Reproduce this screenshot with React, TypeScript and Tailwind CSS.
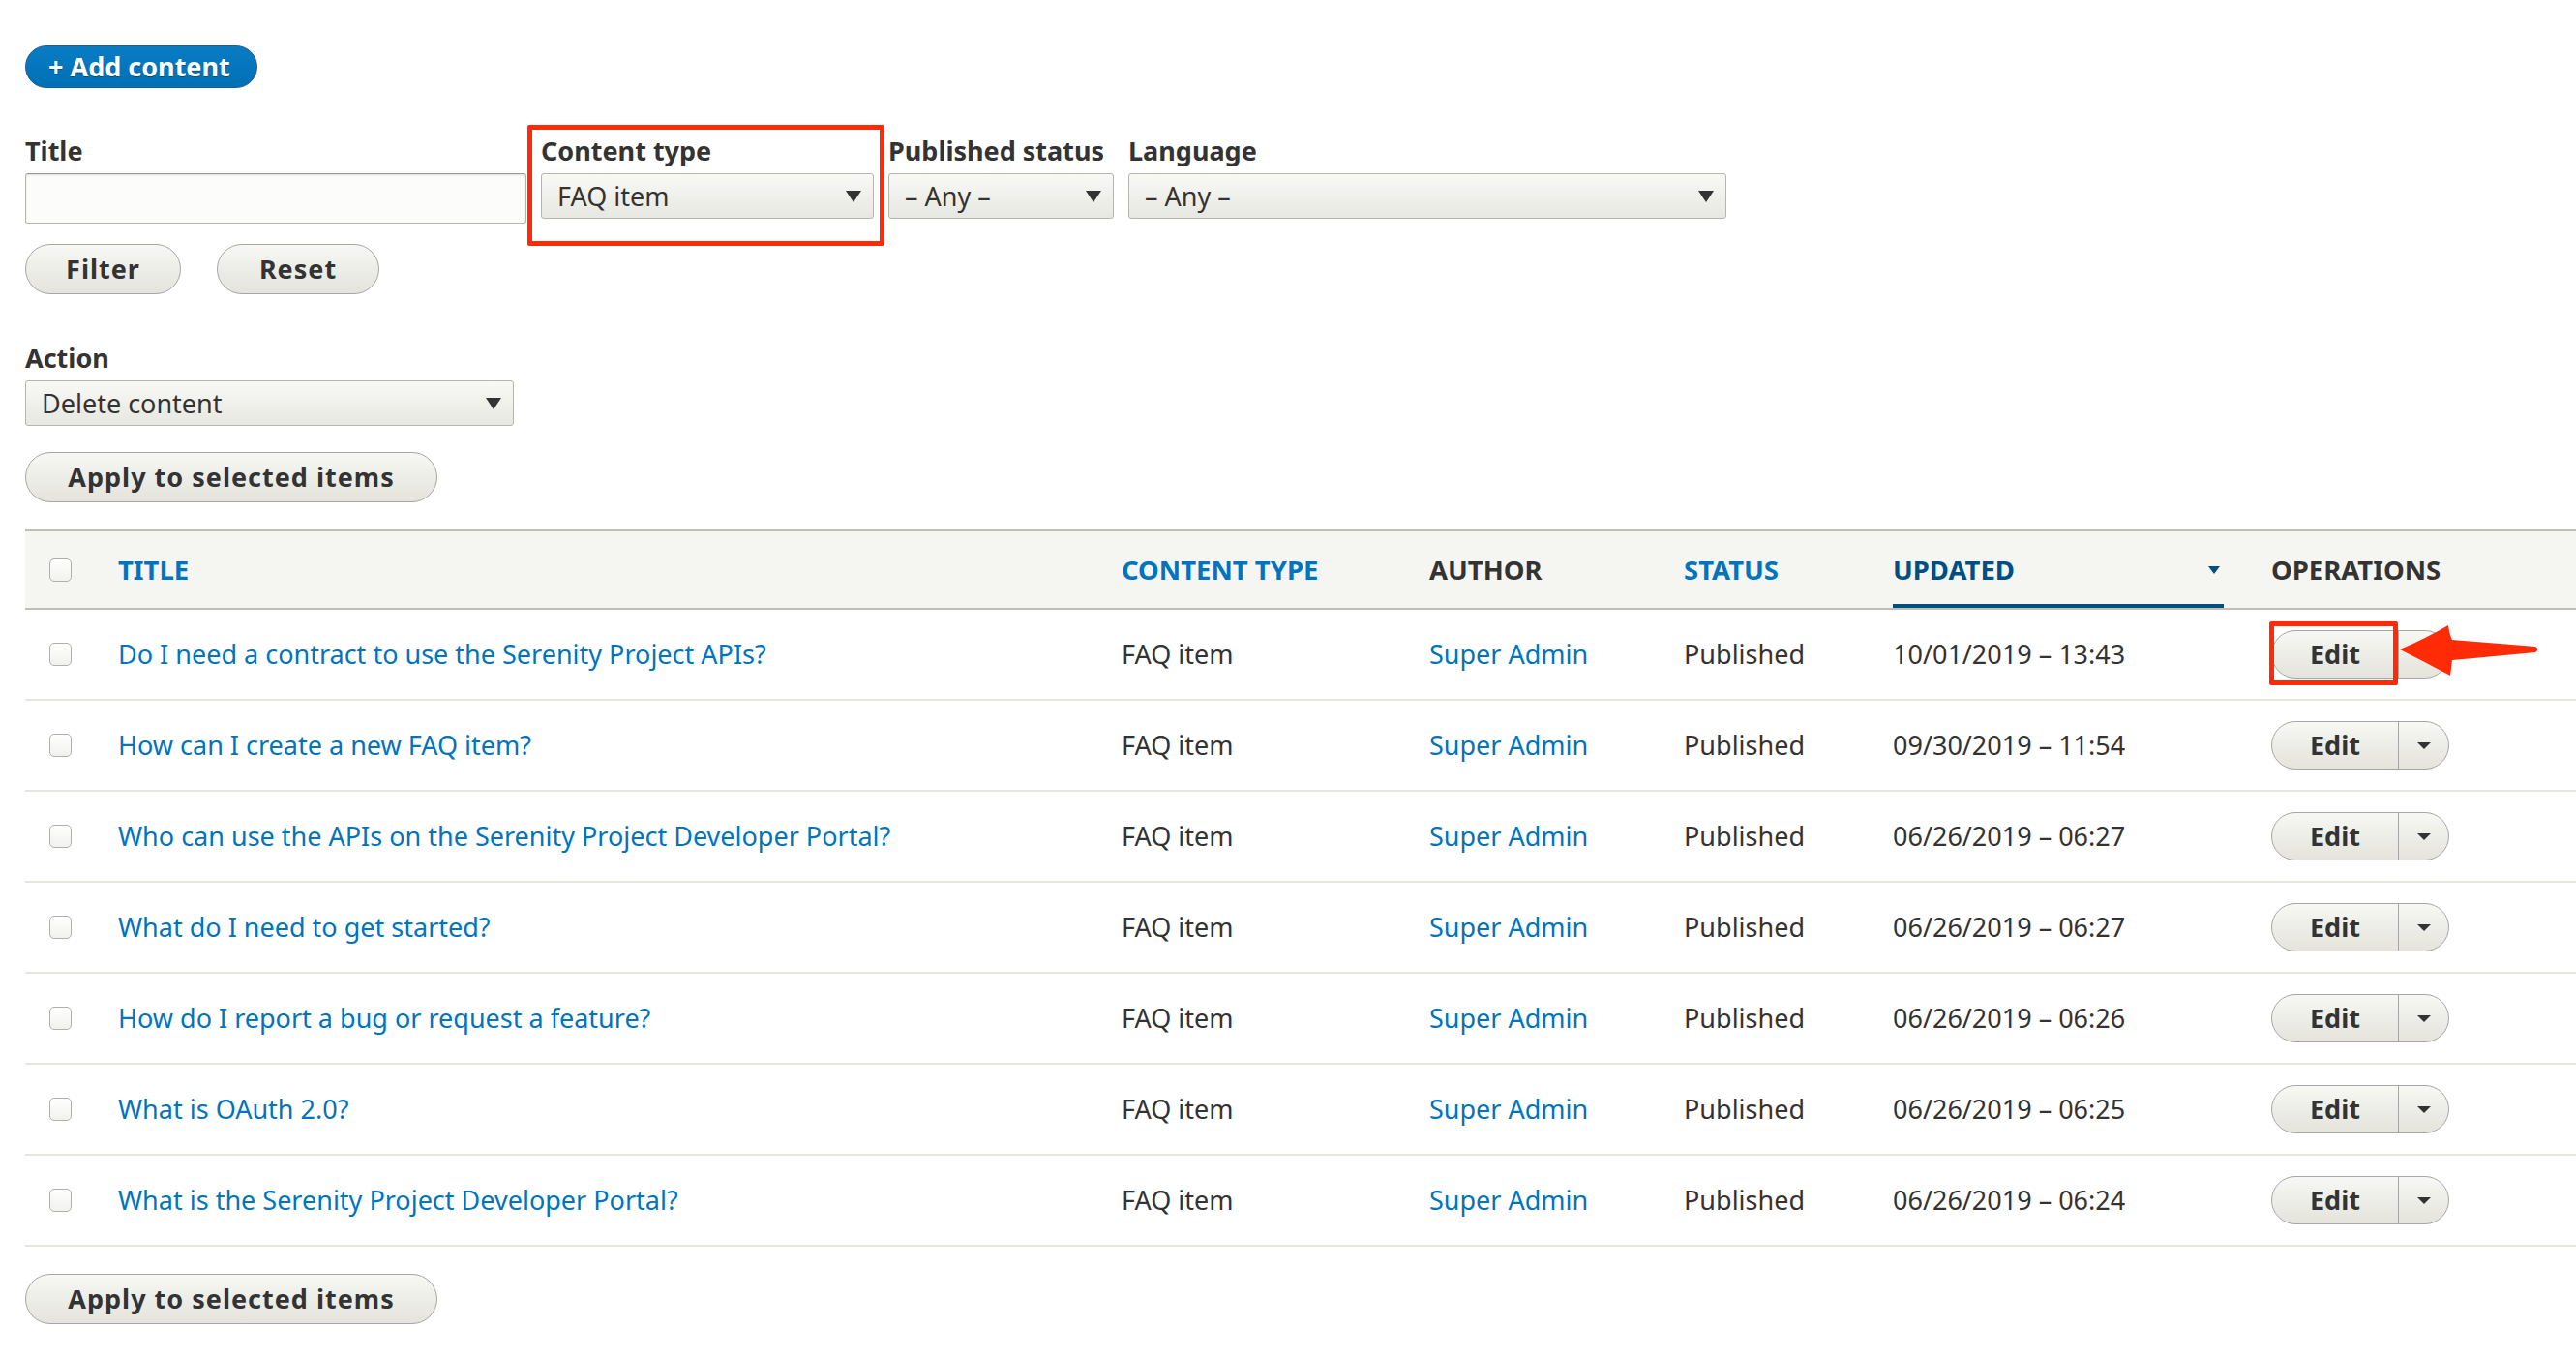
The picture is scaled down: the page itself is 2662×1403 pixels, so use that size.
import React from "react";

function Tri({ w, h, c }: { w: number; h: number; c: string }) {
  return (
    <svg width={w} height={h} viewBox="0 0 10 10" preserveAspectRatio="none" className="block shrink-0">
      <path d="M0 0H10L5 10Z" fill={c} />
    </svg>
  );
}

function Checkbox() {
  return (
    <span className="block w-[23px] h-[24px] rounded-[5px] border-[1.5px] border-[#b0b0ab] bg-linear-to-b from-white to-[#f1f1ee]" />
  );
}

function Select({ value, w }: { value: string; w: string }) {
  return (
    <div
      className={`flex items-center justify-between h-[47px] ${w} rounded-[3px] border-[1.5px] border-[#b5b5b0] bg-linear-to-b from-[#f8f8f5] to-[#e8e8e2] pl-[16px] pr-[12px] text-[#333]`}
    >
      <span className="leading-none">{value}</span>
      <Tri w={16} h={12} c="#333" />
    </div>
  );
}

function EditButton({ highlight }: { highlight?: boolean }) {
  return (
    <div className="relative flex h-[50px] w-[184px] rounded-full border-[1.5px] border-[#a6a6a6] bg-linear-to-b from-[#f7f7f4] to-[#e4e4dc]">
      <div className="w-[130px] flex items-center justify-center font-bold text-[#333]">Edit</div>
      <div className="flex-1 border-l-[1.5px] border-[#a6a6a6] flex items-center justify-center">
        <Tri w={14} h={7} c="#333" />
      </div>
      {highlight && (
        <>
          <div className="absolute -left-[3px] -top-[10px] w-[133px] h-[66px] border-[5px] border-[#ff2a06] rounded-[2px]" />
          <svg
            className="absolute left-[128px] -top-[13px]"
            width="152"
            height="66"
            viewBox="0 0 152 66"
          >
            <path
              d="M4 32 Q30 21 54 7 Q55 16 58 22 L144 29 Q149 32 144 35 L58 43 Q57 52 56 59 Q30 45 4 32 Z"
              fill="#ff2a06"
            />
          </svg>
        </>
      )}
    </div>
  );
}

const rows: [string, string][] = [
  ["Do I need a contract to use the Serenity Project APIs?", "10/01/2019 – 13:43"],
  ["How can I create a new FAQ item?", "09/30/2019 – 11:54"],
  ["Who can use the APIs on the Serenity Project Developer Portal?", "06/26/2019 – 06:27"],
  ["What do I need to get started?", "06/26/2019 – 06:27"],
  ["How do I report a bug or request a feature?", "06/26/2019 – 06:26"],
  ["What is OAuth 2.0?", "06/26/2019 – 06:25"],
  ["What is the Serenity Project Developer Portal?", "06/26/2019 – 06:24"],
];

const cols = "grid grid-cols-[96px_1037px_318px_263px_216px_391px_1fr]";

function GrayButton({ label, w }: { label: string; w: string }) {
  return (
    <div
      className={`h-[52px] ${w} rounded-full border-[1.5px] border-[#a6a6a6] bg-linear-to-b from-[#f7f7f4] to-[#e4e4dc] font-bold tracking-[1px] text-[#333] flex items-center justify-center`}
    >
      {label}
    </div>
  );
}

export default function App() {
  return (
    <div className="relative w-full min-h-screen bg-white font-['Noto_Sans',sans-serif] text-[27px] text-[#333] pt-[47px] pl-[26px]">
      {/* Add content */}
      <div className="flex">
        <div className="h-[44px] w-[240px] rounded-full border border-[#1e5c90] bg-linear-to-b from-[#0a7cc4] to-[#0070b6] text-white font-bold flex items-center pl-[23px] [text-shadow:0_1px_1px_rgba(0,0,0,0.35)]">
          <span className="mr-[7px]">+</span>
          <span>Add content</span>
        </div>
      </div>

      {/* Filters */}
      <div className="flex items-start gap-[15px] mt-[49px]">
        <div className="w-[518px]">
          <div className="font-bold leading-[32px] mb-[7px]">Title</div>
          <div className="h-[52px] w-full rounded-[3px] border-[1.5px] border-[#b5b5b0] border-t-[#999] bg-[#fcfcfa] shadow-[inset_0_1px_2px_rgba(0,0,0,0.12)]" />
        </div>
        <div className="relative">
          <div className="font-bold leading-[32px] mb-[7px]">Content type</div>
          <Select value="FAQ item" w="w-[344px]" />
          <div className="absolute -left-[14px] -top-[11px] w-[369px] h-[125px] border-[5px] border-[#ff2a06] rounded-[2px]" />
        </div>
        <div>
          <div className="font-bold leading-[32px] mb-[7px]">Published status</div>
          <Select value="– Any –" w="w-[233px]" />
        </div>
        <div>
          <div className="font-bold leading-[32px] mb-[7px]">Language</div>
          <Select value="– Any –" w="w-[618px]" />
        </div>
      </div>

      <div className="flex gap-[37px] mt-[21px]">
        <GrayButton label="Filter" w="w-[161px]" />
        <GrayButton label="Reset" w="w-[168px]" />
      </div>

      {/* Action */}
      <div className="mt-[50px]">
        <div className="font-bold leading-[32px] mb-[7px]">Action</div>
        <Select value="Delete content" w="w-[505px]" />
      </div>
      <div className="flex mt-[27px]">
        <GrayButton label="Apply to selected items" w="w-[426px]" />
      </div>

      {/* Table */}
      <div className="mt-[28px]">
        <div
          className={`${cols} h-[83px] border-t-2 border-b-2 border-[#bfbfba] bg-[#f5f5f2] font-bold text-[27.5px] uppercase`}
        >
          <div className="flex items-center pl-[25px]">
            <Checkbox />
          </div>
          <div className="flex items-center text-[#0074bd]">Title</div>
          <div className="flex items-center text-[#0074bd]">Content type</div>
          <div className="flex items-center text-[#333]">Author</div>
          <div className="flex items-center text-[#0074bd]">Status</div>
          <div className="flex items-stretch">
            <div className="w-[342px] flex items-center justify-between border-b-[4px] border-[#004f80] pt-[4px] pr-[4px] text-[#004f80]">
              <span>Updated</span>
              <Tri w={12} h={8} c="#004f80" />
            </div>
          </div>
          <div className="flex items-center text-[#333]">Operations</div>
        </div>

        {rows.map(([title, date], i) => (
          <div key={i} className={`${cols} h-[94px] border-b-2 border-[#e6e5e0]`}>
            <div className="flex items-center pl-[25px]">
              <Checkbox />
            </div>
            <div className="flex items-center text-[#0074bd] whitespace-nowrap">{title}</div>
            <div className="flex items-center">FAQ item</div>
            <div className="flex items-center text-[#0074bd]">Super Admin</div>
            <div className="flex items-center">Published</div>
            <div className="flex items-center">{date}</div>
            <div className="flex items-center">
              <EditButton highlight={i === 0} />
            </div>
          </div>
        ))}
      </div>

      <div className="flex mt-[28px] pb-[30px]">
        <GrayButton label="Apply to selected items" w="w-[426px]" />
      </div>
    </div>
  );
}
